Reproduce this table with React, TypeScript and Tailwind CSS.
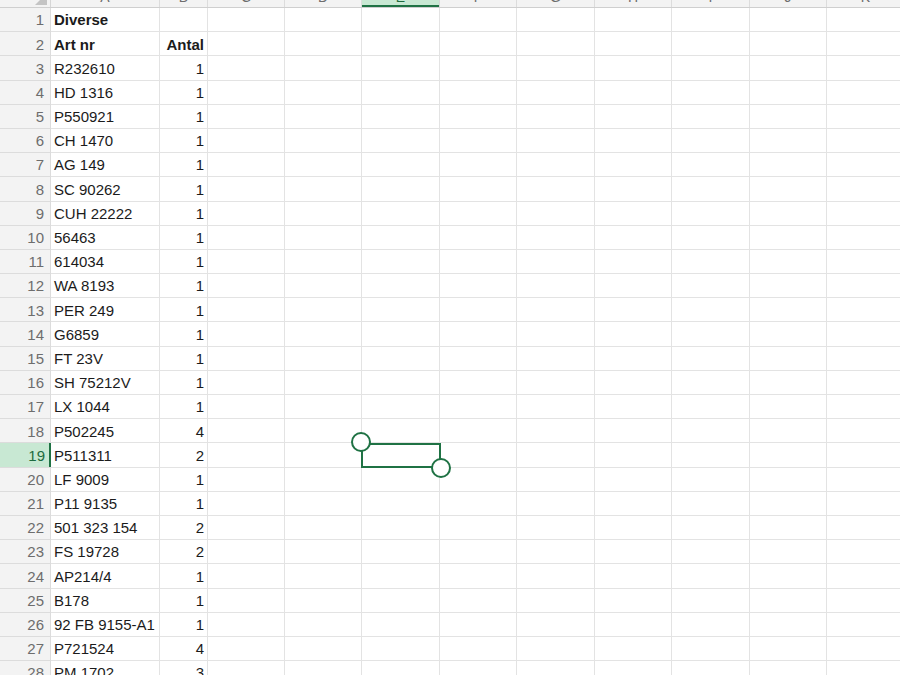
import React from "react";

const cols = [
  { key: "A", w: "w-[109px]" },
  { key: "B", w: "w-[48px]" },
  { key: "C", w: "w-[77px]" },
  { key: "D", w: "w-[77px]" },
  { key: "E", w: "w-[78px]" },
  { key: "F", w: "w-[77px]" },
  { key: "G", w: "w-[78px]" },
  { key: "H", w: "w-[77px]" },
  { key: "I", w: "w-[78px]" },
  { key: "J", w: "w-[77px]" },
  { key: "K", w: "w-[78px]" },
];

type Row = { a: string; b?: string; bold?: boolean };

const rows: Row[] = [
  { a: "Diverse", bold: true },
  { a: "Art nr", b: "Antal", bold: true },
  { a: "R232610", b: "1" },
  { a: "HD 1316", b: "1" },
  { a: "P550921", b: "1" },
  { a: "CH 1470", b: "1" },
  { a: "AG 149", b: "1" },
  { a: "SC 90262", b: "1" },
  { a: "CUH 22222", b: "1" },
  { a: "56463", b: "1" },
  { a: "614034", b: "1" },
  { a: "WA 8193", b: "1" },
  { a: "PER 249", b: "1" },
  { a: "G6859", b: "1" },
  { a: "FT 23V", b: "1" },
  { a: "SH 75212V", b: "1" },
  { a: "LX 1044", b: "1" },
  { a: "P502245", b: "4" },
  { a: "P511311", b: "2" },
  { a: "LF 9009", b: "1" },
  { a: "P11 9135", b: "1" },
  { a: "501 323 154", b: "2" },
  { a: "FS 19728", b: "2" },
  { a: "AP214/4", b: "1" },
  { a: "B178", b: "1" },
  { a: "92 FB 9155-A1", b: "1" },
  { a: "P721524", b: "4" },
  { a: "PM 1702", b: "3" },
];

const SELECTED_ROW = 19;

export default function App() {
  return (
    <div className="relative h-[675px] w-[900px] overflow-hidden bg-white font-['Liberation_Sans',Arial,sans-serif] text-[15px] text-[#1b1b1b]">
      {/* column header, mostly scrolled off the top */}
      <div className="-mt-[16px] flex h-[24px] border-b border-[#cfcfcf] bg-[#f3f3f3]">
        <div className="relative w-[51px] shrink-0 border-r border-[#d6d6d6]">
          <div className="absolute right-[3px] bottom-[2px] h-0 w-0 border-b-[12px] border-l-[12px] border-b-[#c4c4c4] border-l-transparent" />
        </div>
        {cols.map((c) => (
          <div
            key={c.key}
            className={
              c.key === "E"
                ? `${c.w} flex shrink-0 items-end justify-center border-r border-[#d6d6d6] bg-[#c8e8d3] text-[14px] leading-[14px] text-[#1e6b3e] shadow-[inset_0_-2px_0_#1f7244]`
                : `${c.w} flex shrink-0 items-end justify-center border-r border-[#dcdcdc] text-[14px] leading-[14px] text-[#6d6d6d]`
            }
          >
            <span className="pb-[3px]">{c.key}</span>
          </div>
        ))}
      </div>

      {rows.map((r, i) => {
        const n = i + 1;
        const sel = n === SELECTED_ROW;
        return (
          <div key={n} className="flex h-[24.2px]">
            <div
              className={
                sel
                  ? "flex w-[51px] shrink-0 items-center justify-end border-b border-[#dcdcdc] bg-[#c8e8d3] pt-[2px] pr-[6px] text-[15px] text-[#1e6b3e] shadow-[inset_-2px_0_0_#1f7244]"
                  : "flex w-[51px] shrink-0 items-center justify-end border-r border-b border-[#dcdcdc] bg-[#f3f3f3] pt-[2px] pr-[6px] text-[15px] text-[#6d6d6d]"
              }
            >
              {n}
            </div>
            {cols.map((c) => (
              <div
                key={c.key}
                className={`${c.w} flex shrink-0 items-center overflow-visible whitespace-nowrap border-r border-b border-[#e3e3e3] px-[3px] pt-[2px] ${
                  c.key === "B" ? "justify-end" : ""
                } ${r.bold ? "font-bold" : ""}`}
              >
                {c.key === "A" ? r.a : c.key === "B" ? r.b : ""}
              </div>
            ))}
          </div>
        );
      })}

      {/* selection on E19 */}
      <div className="absolute left-[361px] top-[443px] h-[25px] w-[80px] border-2 border-[#1f7244]" />
      <div className="absolute left-[351px] top-[432px] h-[20px] w-[20px] rounded-full border-2 border-[#1f7244] bg-white" />
      <div className="absolute left-[431px] top-[458px] h-[20px] w-[20px] rounded-full border-2 border-[#1f7244] bg-white" />
    </div>
  );
}
